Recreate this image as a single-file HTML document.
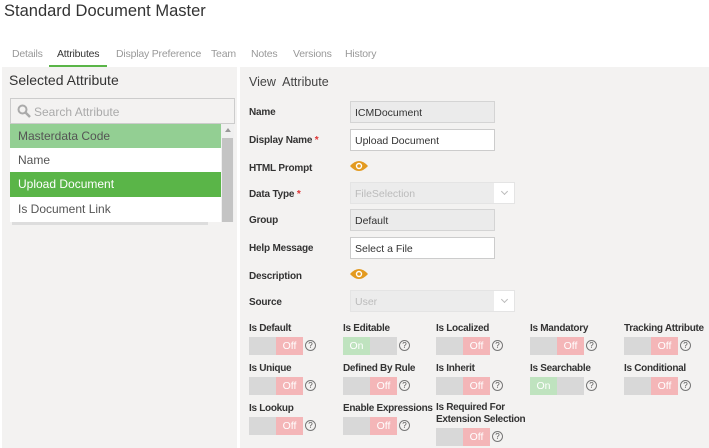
<!DOCTYPE html>
<html><head><meta charset="utf-8"><style>
*{box-sizing:border-box;margin:0;padding:0}
body{width:709px;height:448px;overflow:hidden;background:#fff;font-family:"Liberation Sans",sans-serif;color:#333;position:relative}
.a{position:absolute;white-space:nowrap}
.tab{position:absolute;top:48px;font-size:10.5px;color:#999;white-space:nowrap;letter-spacing:-0.2px}
.lbl{position:absolute;left:249px;font-size:10px;font-weight:bold;color:#333;white-space:nowrap;letter-spacing:-0.2px}
.inp{position:absolute;left:350px;width:145px;height:22px;border:1px solid #ccc;background:#fff;font-size:10.5px;padding:5px 4px 0;color:#333;white-space:nowrap}
.ro{background:#ebebeb;border-color:#d4d4d4}
.sel{position:absolute;left:350px;width:165px;height:22px;border:1px solid #e4e4e4;background:#ececec;font-size:10.5px;padding:5px 4px 0;color:#bbb}
.sel:after{content:"";position:absolute;right:0;top:0;width:20px;height:20px;background:#fff}
.sel i{position:absolute;right:7px;top:6px;width:5px;height:5px;border-right:1px solid #bbb;border-bottom:1px solid #bbb;transform:rotate(45deg);z-index:2}
.eye{position:absolute;left:350px;width:18px;height:12px}
.tl{position:absolute;font-size:10px;font-weight:bold;color:#333;white-space:nowrap;letter-spacing:-0.3px}
.tg{position:absolute;width:54px;height:18px;background:#d8d8d8;font-size:10.5px;color:#fff}
.tg .off{position:absolute;right:0;top:0;width:27px;height:18px;background:#f4b6b8;text-align:center;line-height:18px}
.tg .on{position:absolute;left:0;top:0;width:27px;height:18px;background:#bfe3bf;text-align:center;line-height:18px}
.q{position:absolute;width:11px;height:11px;border:1px solid #777;border-radius:50%;font-size:8px;line-height:9px;text-align:center;color:#555}
</style></head><body>
<div class="a" style="left:4px;top:2px;font-size:16.5px;color:#333">Standard Document Master</div>
<div class="tab" style="left:12px">Details</div>
<div class="tab" style="left:57px;color:#333">Attributes</div>
<div class="tab" style="left:116px">Display Preference</div>
<div class="tab" style="left:211px">Team</div>
<div class="tab" style="left:251px">Notes</div>
<div class="tab" style="left:293px">Versions</div>
<div class="tab" style="left:345px">History</div>
<div class="a" style="left:49px;top:65px;width:58px;height:3px;background:#5ab548"></div>
<div class="a" style="left:2px;top:67px;width:235px;height:381px;background:#f3f2f1"></div>
<div class="a" style="left:240px;top:67px;width:469px;height:381px;background:#f3f2f1"></div>
<div class="a" style="left:9px;top:72px;font-size:14px;color:#333">Selected Attribute</div>
<div class="a" style="left:249px;top:75px;font-size:12.5px;color:#444">View&nbsp; Attribute</div>
<div class="a" style="left:10px;top:98px;width:225px;height:26px;border:1px solid #ccc;background:#f3f2f1"></div>
<svg class="a" style="left:17px;top:104px" width="14" height="14"><circle cx="5.5" cy="5.5" r="4" fill="none" stroke="#aaa" stroke-width="2"/><line x1="8.5" y1="8.5" x2="13" y2="13" stroke="#aaa" stroke-width="2.5"/></svg>
<div class="a" style="left:34px;top:105px;font-size:12px;color:#aaa">Search Attribute</div>
<div class="a" style="left:10px;top:124px;width:211px;height:24px;background:#93cf93;font-size:12px;color:#555;padding:5px 8px 0">Masterdata Code</div>
<div class="a" style="left:10px;top:148px;width:211px;height:24px;background:#fff;font-size:12px;color:#555;padding:5px 8px 0">Name</div>
<div class="a" style="left:10px;top:172px;width:211px;height:25px;background:#5ab548;font-size:12px;color:#fff;padding:5px 8px 0">Upload Document</div>
<div class="a" style="left:10px;top:197px;width:211px;height:25px;background:#fff;font-size:12px;color:#555;padding:5px 8px 0">Is Document Link</div>
<div class="a" style="left:221px;top:124px;width:13px;height:98px;background:#f0f0f0"></div>
<div class="a" style="left:222px;top:138px;width:11px;height:84px;background:#c4c4c4"></div>
<div class="a" style="left:225px;top:128px;width:0;height:0;border:3px solid transparent;border-bottom:4px solid #999;border-top:0"></div>
<div class="a" style="left:12px;top:222px;width:196px;height:3px;background:#ddd"></div>

<div class="lbl" style="top:107px">Name</div><div class="inp ro" style="top:101px">ICMDocument</div>
<div class="lbl" style="top:135px">Display Name <span style="color:#d33">*</span></div><div class="inp" style="top:129px">Upload Document</div>
<div class="lbl" style="top:163px">HTML Prompt</div>
<svg class="eye" style="top:160px" viewBox="0 0 18 12"><path d="M0 6Q9-4 18 6Q9 16 0 6Z" fill="#e39a1f"/><circle cx="9" cy="6" r="3.2" fill="#fff"/><circle cx="9" cy="6" r="1.8" fill="#e39a1f"/></svg>
<div class="lbl" style="top:189px">Data Type <span style="color:#d33">*</span></div><div class="sel" style="top:182px">FileSelection<i></i></div>
<div class="lbl" style="top:215px">Group</div><div class="inp ro" style="top:209px">Default</div>
<div class="lbl" style="top:243px">Help Message</div><div class="inp" style="top:237px">Select a File</div>
<div class="lbl" style="top:271px">Description</div>
<svg class="eye" style="top:268px" viewBox="0 0 18 12"><path d="M0 6Q9-4 18 6Q9 16 0 6Z" fill="#e39a1f"/><circle cx="9" cy="6" r="3.2" fill="#fff"/><circle cx="9" cy="6" r="1.8" fill="#e39a1f"/></svg>
<div class="lbl" style="top:297px">Source</div><div class="sel" style="top:290px">User<i></i></div>

<div class="tl" style="left:249px;top:323px">Is Default</div>
<div class="tl" style="left:343px;top:323px">Is Editable</div>
<div class="tl" style="left:436px;top:323px">Is Localized</div>
<div class="tl" style="left:530px;top:323px">Is Mandatory</div>
<div class="tl" style="left:624px;top:323px">Tracking Attribute</div>
<div class="tl" style="left:249px;top:363px">Is Unique</div>
<div class="tl" style="left:343px;top:363px">Defined By Rule</div>
<div class="tl" style="left:436px;top:363px">Is Inherit</div>
<div class="tl" style="left:530px;top:363px">Is Searchable</div>
<div class="tl" style="left:624px;top:363px">Is Conditional</div>
<div class="tl" style="left:249px;top:403px">Is Lookup</div>
<div class="tl" style="left:343px;top:403px">Enable Expressions</div>
<div class="tl" style="left:436px;top:402px;line-height:12px">Is Required For<br>Extension Selection</div>

<div class="tg" style="left:249px;top:337px"><div class="off">Off</div></div><div class="q" style="left:305px;top:340px">?</div>
<div class="tg" style="left:343px;top:337px"><div class="on">On</div></div><div class="q" style="left:399px;top:340px">?</div>
<div class="tg" style="left:436px;top:337px"><div class="off">Off</div></div><div class="q" style="left:492px;top:340px">?</div>
<div class="tg" style="left:530px;top:337px"><div class="off">Off</div></div><div class="q" style="left:586px;top:340px">?</div>
<div class="tg" style="left:624px;top:337px"><div class="off">Off</div></div><div class="q" style="left:680px;top:340px">?</div>
<div class="tg" style="left:249px;top:377px"><div class="off">Off</div></div><div class="q" style="left:305px;top:380px">?</div>
<div class="tg" style="left:343px;top:377px"><div class="off">Off</div></div><div class="q" style="left:399px;top:380px">?</div>
<div class="tg" style="left:436px;top:377px"><div class="off">Off</div></div><div class="q" style="left:492px;top:380px">?</div>
<div class="tg" style="left:530px;top:377px"><div class="on">On</div></div><div class="q" style="left:586px;top:380px">?</div>
<div class="tg" style="left:624px;top:377px"><div class="off">Off</div></div><div class="q" style="left:680px;top:380px">?</div>
<div class="tg" style="left:249px;top:417px"><div class="off">Off</div></div><div class="q" style="left:305px;top:420px">?</div>
<div class="tg" style="left:343px;top:417px"><div class="off">Off</div></div><div class="q" style="left:399px;top:420px">?</div>
<div class="tg" style="left:436px;top:428px"><div class="off">Off</div></div><div class="q" style="left:492px;top:431px">?</div>
</body></html>
